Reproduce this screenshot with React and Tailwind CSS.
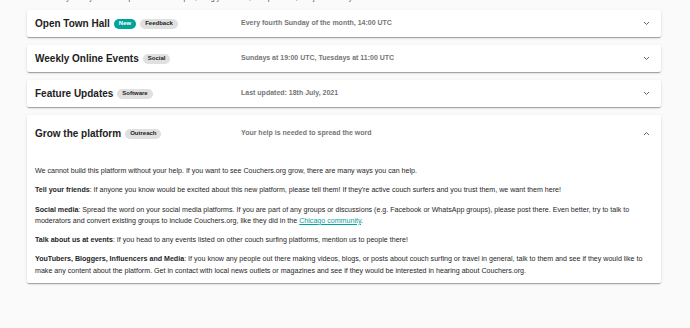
const font = { fontFamily: "'Liberation Sans', Arial, sans-serif" };

function Chevron({ up }) {
  return (
    <svg width="7" height="5" viewBox="0 0 7 5" className="shrink-0 text-[#616161]">
      <polyline
        points={up ? "1,4 3.5,1.5 6,4" : "1,1 3.5,3.5 6,1"}
        fill="none"
        stroke="currentColor"
        strokeWidth="1"
      />
    </svg>
  );
}

function Badge({ children, teal }) {
  return (
    <span
      className={
        teal
          ? "inline-flex items-center h-[10px] px-[5px] rounded-full bg-[#00a398] text-white text-[6px] font-bold"
          : "inline-flex items-center h-[10px] px-[5px] rounded-full bg-[#e0e0e0] text-[#212121] text-[6px] font-bold"
      }
    >
      {children}
    </span>
  );
}

function Summary({ title, badges, info, open }) {
  return (
    <div className={open ? "flex items-center h-[37px] pl-[8px] pr-[11px]" : "flex items-center h-[27px] pl-[8px] pr-[11px]"}>
      <div className="w-[206px] shrink-0 flex items-center gap-[4px]">
        <span className="text-[10px] font-bold text-[#212121]">{title}</span>
        {badges.map((b) => (
          <Badge key={b.label} teal={b.teal}>{b.label}</Badge>
        ))}
      </div>
      <div className="flex-1 text-[7px] font-bold text-[#757575]">{info}</div>
      <Chevron up={open} />
    </div>
  );
}

const cardCls =
  "bg-white rounded-[2px] shadow-[0_2px_1px_-1px_rgba(0,0,0,0.2),0_1px_1px_0_rgba(0,0,0,0.14),0_1px_3px_0_rgba(0,0,0,0.12)]";

export default function App() {
  return (
    <div className="min-h-[328px] bg-[#fafafa] overflow-hidden" style={font}>
      <div className="h-[3px] overflow-hidden">
        <p className="pl-[48px] text-[7px] leading-[11px] -mt-[8px] text-[#424242]">
          Have your say in how the platform is developed, bring your ideas, ask questions, and join us every month.
        </p>
      </div>
      <div className="w-[634px] ml-[27px] mt-[7px] flex flex-col gap-[8px]">
        <div className={cardCls}>
          <Summary
            title="Open Town Hall"
            badges={[{ label: "New", teal: true }, { label: "Feedback" }]}
            info="Every fourth Sunday of the month, 14:00 UTC"
          />
        </div>
        <div className={cardCls}>
          <Summary
            title="Weekly Online Events"
            badges={[{ label: "Social" }]}
            info="Sundays at 19:00 UTC, Tuesdays at 11:00 UTC"
          />
        </div>
        <div className={cardCls}>
          <Summary
            title="Feature Updates"
            badges={[{ label: "Software" }]}
            info="Last updated: 18th July, 2021"
          />
        </div>
        <div className={cardCls}>
          <Summary
            title="Grow the platform"
            badges={[{ label: "Outreach" }]}
            info="Your help is needed to spread the word"
            open
          />
          <div className="px-[8px] pt-[14px] pb-[6px] text-[7.1px] leading-[11.3px] text-[#262626] flex flex-col gap-[8px]">
            <p>
              We cannot build this platform without your help. If you want to see Couchers.org grow, there are many ways you can help.
            </p>
            <p>
              <b>Tell your friends</b>: If anyone you know would be excited about this new platform, please tell them! If they're active couch surfers and you trust them, we want them here!
            </p>
            <p>
              <b>Social media</b>: Spread the word on your social media platforms. If you are part of any groups or discussions (e.g. Facebook or WhatsApp groups), please post there. Even better, try to talk to moderators and convert existing groups to include Couchers.org, like they did in the{" "}
              <a href="#" className="text-[#00a398] underline">Chicago community</a>.
            </p>
            <p>
              <b>Talk about us at events</b>: If you head to any events listed on other couch surfing platforms, mention us to people there!
            </p>
            <p>
              <b>YouTubers, Bloggers, Influencers and Media</b>: If you know any people out there making videos, blogs, or posts about couch surfing or travel in general, talk to them and see if they would like to make any content about the platform. Get in contact with local news outlets or magazines and see if they would be interested in hearing about Couchers.org.
            </p>
          </div>
        </div>
      </div>
    </div>
  );
}
